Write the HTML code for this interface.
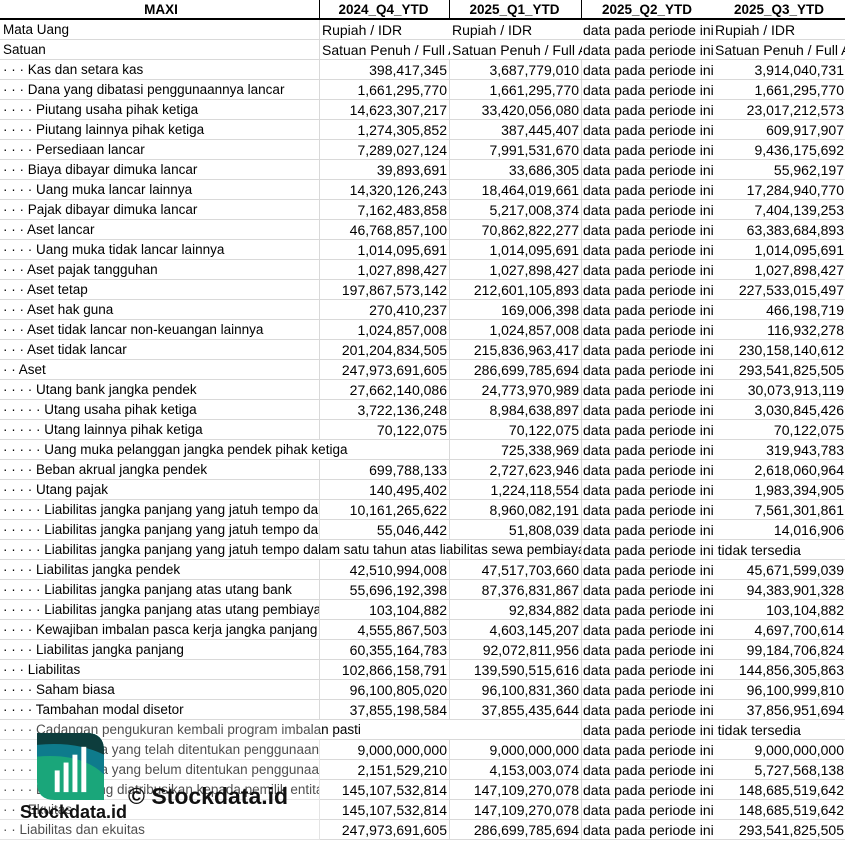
<!DOCTYPE html>
<html><head><meta charset="utf-8"><style>
body{margin:0;width:845px;height:841px;overflow:hidden;background:#fff;font-family:"Liberation Sans",sans-serif;font-size:14px;color:#000;position:relative}
.r{position:absolute;left:0;width:845px;height:20px}
.r div{position:absolute;top:0;height:19px;line-height:20px;border-right:1px solid #d9d9d9;border-bottom:1px solid #d9d9d9;overflow:hidden;white-space:nowrap;box-sizing:content-box;background:#fff}
.a{left:0;width:316px;padding-left:3px;font-size:13.5px}
.b{left:320px;width:127px;padding:0 2px 0 0}
.c{left:450px;width:129px;padding:0 2px 0 0}
.d{left:582px;width:128px;padding:0 2px 0 1px}
.e{left:713px;width:130px;padding:0 2px 0 1px}
.b,.c,.e{text-align:right}
.t{text-align:left!important;padding-left:2px!important}
.h div{font-weight:bold;font-size:13.5px;text-align:center!important;border-right:1px solid #000;border-bottom:2px solid #000;height:18px;line-height:20px}
.wm{position:absolute;pointer-events:none}
</style></head><body>
<div class="r h" style="top:0"><div class="a">MAXI</div><div class="b">2024_Q4_YTD</div><div class="c">2025_Q1_YTD</div><div class="d">2025_Q2_YTD</div><div class="e">2025_Q3_YTD</div></div>
<div class="r" style="top:20px"><div class="a">Mata Uang</div><div class="b t">Rupiah / IDR</div><div class="c t">Rupiah / IDR</div><div class="d">data pada periode ini tidak tersedia</div><div class="e t">Rupiah / IDR</div></div>
<div class="r" style="top:40px"><div class="a">Satuan</div><div class="b t">Satuan Penuh / Full Amount</div><div class="c t">Satuan Penuh / Full Amount</div><div class="d">data pada periode ini tidak tersedia</div><div class="e t">Satuan Penuh / Full Amount</div></div>
<div class="r" style="top:60px"><div class="a">· · · Kas dan setara kas</div><div class="b">398,417,345</div><div class="c">3,687,779,010</div><div class="d">data pada periode ini tidak tersedia</div><div class="e">3,914,040,731</div></div>
<div class="r" style="top:80px"><div class="a">· · · Dana yang dibatasi penggunaannya lancar</div><div class="b">1,661,295,770</div><div class="c">1,661,295,770</div><div class="d">data pada periode ini tidak tersedia</div><div class="e">1,661,295,770</div></div>
<div class="r" style="top:100px"><div class="a">· · · · Piutang usaha pihak ketiga</div><div class="b">14,623,307,217</div><div class="c">33,420,056,080</div><div class="d">data pada periode ini tidak tersedia</div><div class="e">23,017,212,573</div></div>
<div class="r" style="top:120px"><div class="a">· · · · Piutang lainnya pihak ketiga</div><div class="b">1,274,305,852</div><div class="c">387,445,407</div><div class="d">data pada periode ini tidak tersedia</div><div class="e">609,917,907</div></div>
<div class="r" style="top:140px"><div class="a">· · · · Persediaan lancar</div><div class="b">7,289,027,124</div><div class="c">7,991,531,670</div><div class="d">data pada periode ini tidak tersedia</div><div class="e">9,436,175,692</div></div>
<div class="r" style="top:160px"><div class="a">· · · Biaya dibayar dimuka lancar</div><div class="b">39,893,691</div><div class="c">33,686,305</div><div class="d">data pada periode ini tidak tersedia</div><div class="e">55,962,197</div></div>
<div class="r" style="top:180px"><div class="a">· · · · Uang muka lancar lainnya</div><div class="b">14,320,126,243</div><div class="c">18,464,019,661</div><div class="d">data pada periode ini tidak tersedia</div><div class="e">17,284,940,770</div></div>
<div class="r" style="top:200px"><div class="a">· · · Pajak dibayar dimuka lancar</div><div class="b">7,162,483,858</div><div class="c">5,217,008,374</div><div class="d">data pada periode ini tidak tersedia</div><div class="e">7,404,139,253</div></div>
<div class="r" style="top:220px"><div class="a">· · · Aset lancar</div><div class="b">46,768,857,100</div><div class="c">70,862,822,277</div><div class="d">data pada periode ini tidak tersedia</div><div class="e">63,383,684,893</div></div>
<div class="r" style="top:240px"><div class="a">· · · · Uang muka tidak lancar lainnya</div><div class="b">1,014,095,691</div><div class="c">1,014,095,691</div><div class="d">data pada periode ini tidak tersedia</div><div class="e">1,014,095,691</div></div>
<div class="r" style="top:260px"><div class="a">· · · Aset pajak tangguhan</div><div class="b">1,027,898,427</div><div class="c">1,027,898,427</div><div class="d">data pada periode ini tidak tersedia</div><div class="e">1,027,898,427</div></div>
<div class="r" style="top:280px"><div class="a">· · · Aset tetap</div><div class="b">197,867,573,142</div><div class="c">212,601,105,893</div><div class="d">data pada periode ini tidak tersedia</div><div class="e">227,533,015,497</div></div>
<div class="r" style="top:300px"><div class="a">· · · Aset hak guna</div><div class="b">270,410,237</div><div class="c">169,006,398</div><div class="d">data pada periode ini tidak tersedia</div><div class="e">466,198,719</div></div>
<div class="r" style="top:320px"><div class="a">· · · Aset tidak lancar non-keuangan lainnya</div><div class="b">1,024,857,008</div><div class="c">1,024,857,008</div><div class="d">data pada periode ini tidak tersedia</div><div class="e">116,932,278</div></div>
<div class="r" style="top:340px"><div class="a">· · · Aset tidak lancar</div><div class="b">201,204,834,505</div><div class="c">215,836,963,417</div><div class="d">data pada periode ini tidak tersedia</div><div class="e">230,158,140,612</div></div>
<div class="r" style="top:360px"><div class="a">· · Aset</div><div class="b">247,973,691,605</div><div class="c">286,699,785,694</div><div class="d">data pada periode ini tidak tersedia</div><div class="e">293,541,825,505</div></div>
<div class="r" style="top:380px"><div class="a">· · · · Utang bank jangka pendek</div><div class="b">27,662,140,086</div><div class="c">24,773,970,989</div><div class="d">data pada periode ini tidak tersedia</div><div class="e">30,073,913,119</div></div>
<div class="r" style="top:400px"><div class="a">· · · · · Utang usaha pihak ketiga</div><div class="b">3,722,136,248</div><div class="c">8,984,638,897</div><div class="d">data pada periode ini tidak tersedia</div><div class="e">3,030,845,426</div></div>
<div class="r" style="top:420px"><div class="a">· · · · · Utang lainnya pihak ketiga</div><div class="b">70,122,075</div><div class="c">70,122,075</div><div class="d">data pada periode ini tidak tersedia</div><div class="e">70,122,075</div></div>
<div class="r" style="top:440px"><div class="b"></div><div class="a" style="width:426px;border-right:none">· · · · · Uang muka pelanggan jangka pendek pihak ketiga</div><div class="c">725,338,969</div><div class="d">data pada periode ini tidak tersedia</div><div class="e">319,943,783</div></div>
<div class="r" style="top:460px"><div class="a">· · · · Beban akrual jangka pendek</div><div class="b">699,788,133</div><div class="c">2,727,623,946</div><div class="d">data pada periode ini tidak tersedia</div><div class="e">2,618,060,964</div></div>
<div class="r" style="top:480px"><div class="a">· · · · Utang pajak</div><div class="b">140,495,402</div><div class="c">1,224,118,554</div><div class="d">data pada periode ini tidak tersedia</div><div class="e">1,983,394,905</div></div>
<div class="r" style="top:500px"><div class="a">· · · · · Liabilitas jangka panjang yang jatuh tempo dalam satu tahun</div><div class="b">10,161,265,622</div><div class="c">8,960,082,191</div><div class="d">data pada periode ini tidak tersedia</div><div class="e">7,561,301,861</div></div>
<div class="r" style="top:520px"><div class="a">· · · · · Liabilitas jangka panjang yang jatuh tempo dalam satu tahun</div><div class="b">55,046,442</div><div class="c">51,808,039</div><div class="d">data pada periode ini tidak tersedia</div><div class="e">14,016,906</div></div>
<div class="r" style="top:540px"><div class="a" style="width:578px">· · · · · Liabilitas jangka panjang yang jatuh tempo dalam satu tahun atas liabilitas sewa pembiayaan</div><div class="d" style="width:260px;border-right:none">data pada periode ini tidak tersedia</div></div>
<div class="r" style="top:560px"><div class="a">· · · · Liabilitas jangka pendek</div><div class="b">42,510,994,008</div><div class="c">47,517,703,660</div><div class="d">data pada periode ini tidak tersedia</div><div class="e">45,671,599,039</div></div>
<div class="r" style="top:580px"><div class="a">· · · · · Liabilitas jangka panjang atas utang bank</div><div class="b">55,696,192,398</div><div class="c">87,376,831,867</div><div class="d">data pada periode ini tidak tersedia</div><div class="e">94,383,901,328</div></div>
<div class="r" style="top:600px"><div class="a">· · · · · Liabilitas jangka panjang atas utang pembiayaan</div><div class="b">103,104,882</div><div class="c">92,834,882</div><div class="d">data pada periode ini tidak tersedia</div><div class="e">103,104,882</div></div>
<div class="r" style="top:620px"><div class="a">· · · · Kewajiban imbalan pasca kerja jangka panjang</div><div class="b">4,555,867,503</div><div class="c">4,603,145,207</div><div class="d">data pada periode ini tidak tersedia</div><div class="e">4,697,700,614</div></div>
<div class="r" style="top:640px"><div class="a">· · · · Liabilitas jangka panjang</div><div class="b">60,355,164,783</div><div class="c">92,072,811,956</div><div class="d">data pada periode ini tidak tersedia</div><div class="e">99,184,706,824</div></div>
<div class="r" style="top:660px"><div class="a">· · · Liabilitas</div><div class="b">102,866,158,791</div><div class="c">139,590,515,616</div><div class="d">data pada periode ini tidak tersedia</div><div class="e">144,856,305,863</div></div>
<div class="r" style="top:680px"><div class="a">· · · · Saham biasa</div><div class="b">96,100,805,020</div><div class="c">96,100,831,360</div><div class="d">data pada periode ini tidak tersedia</div><div class="e">96,100,999,810</div></div>
<div class="r" style="top:700px"><div class="a">· · · · Tambahan modal disetor</div><div class="b">37,855,198,584</div><div class="c">37,855,435,644</div><div class="d">data pada periode ini tidak tersedia</div><div class="e">37,856,951,694</div></div>
<div class="r" style="top:720px"><div class="a" style="width:578px">· · · · Cadangan pengukuran kembali program imbalan pasti</div><div class="d" style="width:260px;border-right:none">data pada periode ini tidak tersedia</div></div>
<div class="r" style="top:740px"><div class="a">· · · · · Saldo laba yang telah ditentukan penggunaannya</div><div class="b">9,000,000,000</div><div class="c">9,000,000,000</div><div class="d">data pada periode ini tidak tersedia</div><div class="e">9,000,000,000</div></div>
<div class="r" style="top:760px"><div class="a">· · · · · Saldo laba yang belum ditentukan penggunaannya</div><div class="b">2,151,529,210</div><div class="c">4,153,003,074</div><div class="d">data pada periode ini tidak tersedia</div><div class="e">5,727,568,138</div></div>
<div class="r" style="top:780px"><div class="a">· · · · Ekuitas yang diatribusikan kepada pemilik entitas induk</div><div class="b">145,107,532,814</div><div class="c">147,109,270,078</div><div class="d">data pada periode ini tidak tersedia</div><div class="e">148,685,519,642</div></div>
<div class="r" style="top:800px"><div class="a">· · · Ekuitas</div><div class="b">145,107,532,814</div><div class="c">147,109,270,078</div><div class="d">data pada periode ini tidak tersedia</div><div class="e">148,685,519,642</div></div>
<div class="r" style="top:820px"><div class="a">· · Liabilitas dan ekuitas</div><div class="b">247,973,691,605</div><div class="c">286,699,785,694</div><div class="d">data pada periode ini tidak tersedia</div><div class="e">293,541,825,505</div></div>

<div class="wm" style="left:0;top:720px;width:320px;height:121px;background:rgba(255,255,255,0.3)"></div>
<svg class="wm" style="left:37px;top:733px" width="67" height="67" viewBox="0 0 68 68">
<defs><clipPath id="lf"><path d="M0 0H50Q68 0 68 18V68H18Q0 68 0 50Z"/></clipPath></defs>
<g clip-path="url(#lf)">
<rect width="68" height="68" fill="#1aa67a"/>
<path d="M0 0H68V42Q45 20 0 24Z" fill="#0e7b8c"/>
<path d="M0 0H68V22Q40 8 0 12Z" fill="#0d3d3d"/>
</g>
<rect x="18" y="38" width="5" height="22" fill="#fff"/>
<rect x="27" y="30" width="5" height="30" fill="#fff"/>
<rect x="36" y="22" width="5" height="38" fill="#fff"/>
<rect x="45" y="14" width="5" height="46" fill="#fff"/>
</svg>
<div class="wm" style="left:128px;top:783px;font-size:23px;font-weight:bold;color:#111;line-height:26px">© Stockdata.id</div>
<div class="wm" style="left:20px;top:800px;font-size:18px;font-weight:bold;color:#111;line-height:24px">Stockdata.id</div>
</body></html>
